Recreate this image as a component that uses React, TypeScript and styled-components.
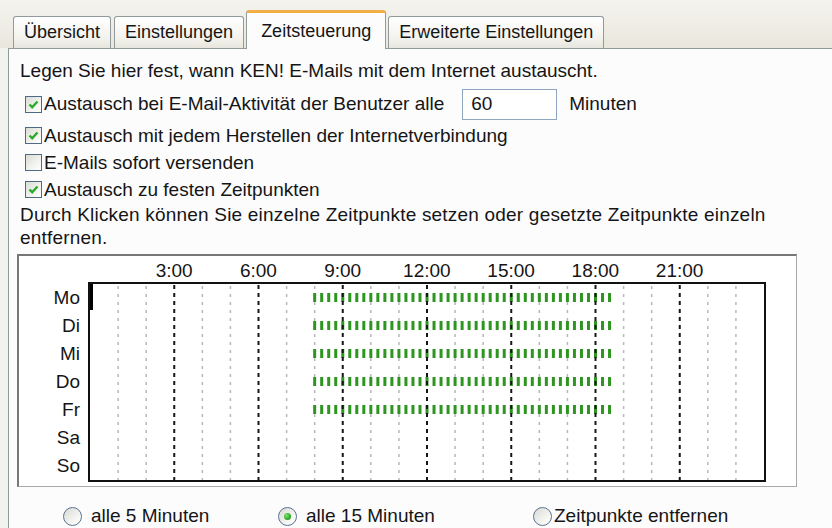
import React from 'react';
import styled, { createGlobalStyle } from 'styled-components';

const HOURS = 24;
const GRID_W = 674;
const ROW_H = 28;
const DAYS = ['Mo', 'Di', 'Mi', 'Do', 'Fr', 'Sa', 'So'];
const WORKDAYS = 5;
const HOUR_LABELS = ['3:00', '6:00', '9:00', '12:00', '15:00', '18:00', '21:00'];

const GlobalStyle = createGlobalStyle`
  html, body {
    margin: 0;
    padding: 0;
  }
  body {
    width: 832px;
    height: 528px;
    overflow: hidden;
    background: #f2f2ef;
    font-family: "Liberation Sans", Arial, sans-serif;
    color: #151515;
  }
`;

const Dialog = styled.div`
  width: 832px;
  height: 528px;
  display: flex;
  flex-direction: column;
`;

const TabStrip = styled.div`
  height: 49px;
  display: flex;
  align-items: flex-end;
  gap: 3px;
  padding-left: 13px;
  background: linear-gradient(#f4f3ef, #e9e7dc);
`;

const Tab = styled.div<{ $active?: boolean }>`
  box-sizing: border-box;
  height: ${(p) => (p.$active ? 39 : 32)}px;
  margin: 0 ${(p) => (p.$active ? -1 : 0)}px ${(p) => (p.$active ? -1 : 0)}px;
  padding: 0 ${(p) => (p.$active ? 14 : 10)}px;
  display: flex;
  align-items: center;
  font-size: 18px;
  border: 1px solid #919b9c;
  border-bottom: none;
  border-top: ${(p) => (p.$active ? '3px solid #f1ae45' : '1px solid #919b9c')};
  border-radius: 3px 3px 0 0;
  background: ${(p) => (p.$active ? '#fcfcfd' : 'linear-gradient(#ffffff, #f4f3ee 65%, #e7e6de)')};
  position: relative;
  z-index: ${(p) => (p.$active ? 1 : 0)};
`;

const Panel = styled.div`
  flex: 1;
  margin-left: 8px;
  padding: 10px 0 0 11px;
  border-top: 1px solid #919b9c;
  border-left: 1px solid #919b9c;
  background: #fcfcfd;
  font-size: 19px;
`;

const Intro = styled.p`
  margin: 0;
  line-height: 24px;
`;

const CheckList = styled.div`
  display: flex;
  flex-direction: column;
  margin: 5px 0 0 5px;
`;

const CheckRow = styled.label<{ $tall?: boolean }>`
  display: flex;
  align-items: center;
  gap: 2px;
  height: ${(p) => (p.$tall ? 32 : 27)}px;
  margin-bottom: ${(p) => (p.$tall ? 2 : 0)}px;
`;

const Box = styled.span`
  box-sizing: border-box;
  width: 17px;
  height: 17px;
  flex: none;
  display: grid;
  place-items: center;
  border: 1px solid #4f6a88;
  background: linear-gradient(135deg, #dcdcd5, #f6f6f3 70%, #ffffff);
`;

const NumberField = styled.div`
  box-sizing: border-box;
  width: 95px;
  height: 31px;
  margin: 0 10px 0 16px;
  padding: 3px 0 0 8px;
  border: 1px solid #8ea6bf;
  background: #fff;
`;

const Hint = styled.p`
  margin: 0;
  width: 790px;
  line-height: 23px;
  letter-spacing: 0.2px;
`;

const ChartFrame = styled.div`
  box-sizing: border-box;
  width: 780px;
  height: 233px;
  margin: 5px 0 0 -3px;
  display: grid;
  grid-template-columns: 69px auto;
  grid-template-rows: 26px auto;
  align-content: start;
  border-style: solid;
  border-width: 2px 1px 1px 2px;
  border-color: #777 #a9a9a9 #a9a9a9 #777;
  background: #fff;
`;

const HourScale = styled.div`
  grid-column: 2;
  display: grid;
  grid-template-columns: 44px repeat(7, ${GRID_W / 8}px);
  align-items: center;
  padding-top: 4px;
`;

const HourLabel = styled.span`
  text-align: center;
  white-space: nowrap;
`;

const DayColumn = styled.div`
  grid-column: 1;
  padding: 2px 8px 0 0;
  text-align: right;
`;

const DayLabel = styled.div`
  height: ${ROW_H}px;
  line-height: ${ROW_H}px;
`;

const ScheduleGrid = styled.div`
  width: ${GRID_W}px;
  height: ${ROW_H * DAYS.length}px;
  border: 2px solid #111;
  background: #fff;

  svg {
    display: block;
  }
`;

const RadioRow = styled.div`
  display: grid;
  grid-template-columns: 215px 255px auto;
  margin: 17px 0 0 43px;
  height: 24px;
  align-items: center;
`;

const RadioOption = styled.label<{ $tight?: boolean }>`
  display: flex;
  align-items: center;
  gap: ${(p) => (p.$tight ? 2 : 9)}px;
`;

const Radio = styled.span<{ $checked?: boolean }>`
  box-sizing: border-box;
  width: 19px;
  height: 19px;
  border-radius: 50%;
  border: 1px solid #5a7290;
  display: grid;
  place-items: center;
  background: linear-gradient(135deg, #d9d9d3, #f7f7f4 70%, #ffffff);

  &::after {
    content: '';
    width: 7px;
    height: 7px;
    border-radius: 50%;
    display: ${(p) => (p.$checked ? 'block' : 'none')};
    background: radial-gradient(circle at 35% 35%, #7fe070, #22a322 70%);
  }
`;

const Check = () => (
  <svg width="13" height="13" viewBox="0 0 13 13">
    <path d="M2.5 6.5 L5.2 9.2 L10.5 3.5" fill="none" stroke="#2bab2b" strokeWidth="2.4" />
  </svg>
);

function Option({ checked, children }: { checked?: boolean; children: React.ReactNode }) {
  return (
    <>
      <Box>{checked && <Check />}</Box>
      <span>{children}</span>
    </>
  );
}

// green marks every 15 minutes, 8:00 to 18:30, Monday to Friday
function ScheduleMarks() {
  const hourX = (h: number) => (h * GRID_W) / HOURS;
  const hours = Array.from({ length: HOURS - 1 }, (_, i) => i + 1);
  const slots = Array.from({ length: 43 }, (_, k) => 8 + k / 4);

  return (
    <svg width={GRID_W} height={ROW_H * DAYS.length}>
      {hours
        .filter((h) => h % 3 !== 0)
        .map((h) => (
          <line key={h} x1={hourX(h)} x2={hourX(h)} y1={2} y2={ROW_H * 7} stroke="#b8b8b8" strokeWidth={1.5} strokeDasharray="3 5" />
        ))}
      {Array.from({ length: WORKDAYS }, (_, d) =>
        slots.map((t) => (
          <rect key={`${d}-${t}`} x={hourX(t) - 1.5} y={d * ROW_H + 9} width={3} height={9} fill="#2f9521" />
        ))
      )}
      {hours
        .filter((h) => h % 3 === 0)
        .map((h) => (
          <line key={h} x1={hourX(h)} x2={hourX(h)} y1={1} y2={ROW_H * 7} stroke="#161616" strokeWidth={2} strokeDasharray="4 4" />
        ))}
      <rect x={0} y={0} width={3} height={26} fill="#000" />
    </svg>
  );
}

export default function App() {
  return (
    <>
      <GlobalStyle />
      <Dialog>
        <TabStrip>
          <Tab>Übersicht</Tab>
          <Tab>Einstellungen</Tab>
          <Tab $active>Zeitsteuerung</Tab>
          <Tab>Erweiterte Einstellungen</Tab>
        </TabStrip>
        <Panel>
          <Intro>Legen Sie hier fest, wann KEN! E-Mails mit dem Internet austauscht.</Intro>
          <CheckList>
            <CheckRow $tall>
              <Option checked>Austausch bei E-Mail-Aktivität der Benutzer alle</Option>
              <NumberField>60</NumberField>
              <span>Minuten</span>
            </CheckRow>
            <CheckRow>
              <Option checked>Austausch mit jedem Herstellen der Internetverbindung</Option>
            </CheckRow>
            <CheckRow>
              <Option>E-Mails sofort versenden</Option>
            </CheckRow>
            <CheckRow>
              <Option checked>Austausch zu festen Zeitpunkten</Option>
            </CheckRow>
          </CheckList>
          <Hint>
            Durch Klicken können Sie einzelne Zeitpunkte setzen oder gesetzte Zeitpunkte einzeln entfernen.
          </Hint>
          <ChartFrame>
            <HourScale>
              <span />
              {HOUR_LABELS.map((h) => (
                <HourLabel key={h}>{h}</HourLabel>
              ))}
            </HourScale>
            <DayColumn>
              {DAYS.map((d) => (
                <DayLabel key={d}>{d}</DayLabel>
              ))}
            </DayColumn>
            <ScheduleGrid>
              <ScheduleMarks />
            </ScheduleGrid>
          </ChartFrame>
          <RadioRow>
            <RadioOption>
              <Radio />
              alle 5 Minuten
            </RadioOption>
            <RadioOption>
              <Radio $checked />
              alle 15 Minuten
            </RadioOption>
            <RadioOption $tight>
              <Radio />
              Zeitpunkte entfernen
            </RadioOption>
          </RadioRow>
        </Panel>
      </Dialog>
    </>
  );
}
